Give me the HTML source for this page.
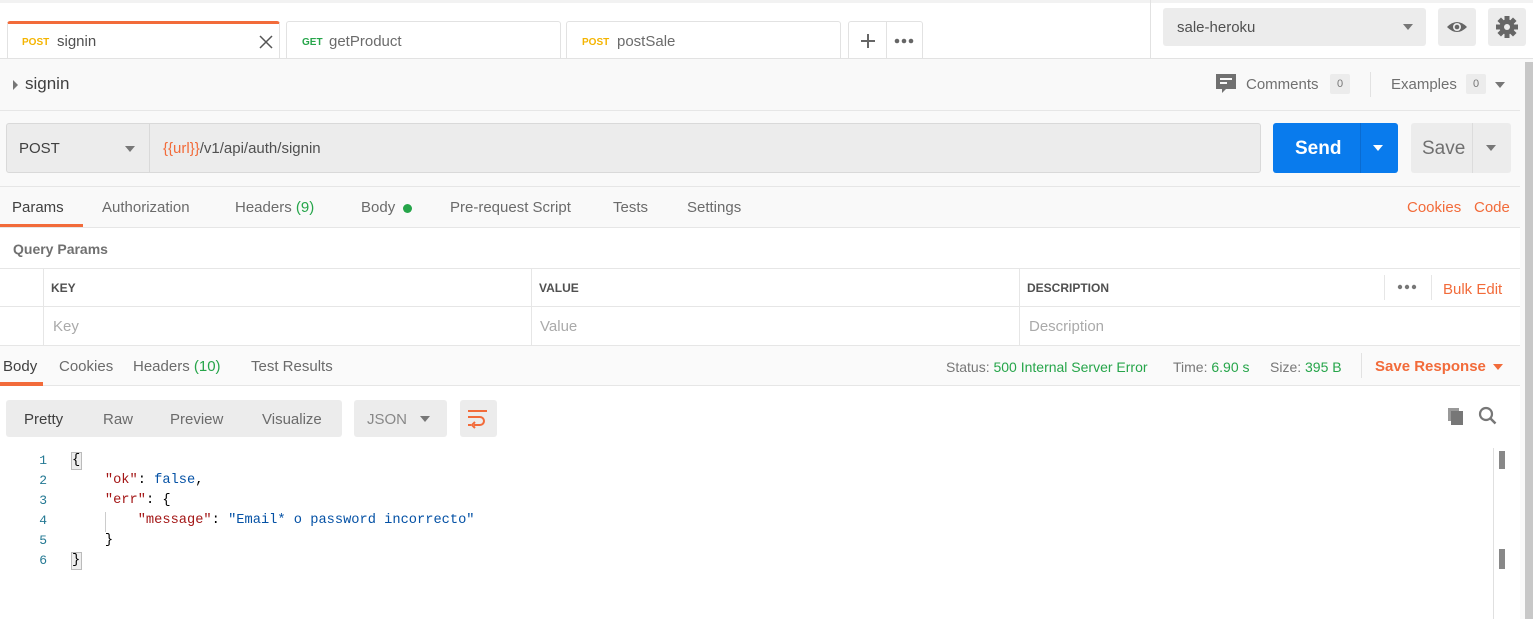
<!DOCTYPE html>
<html><head><meta charset="utf-8"><style>
*{box-sizing:border-box;margin:0;padding:0}
body{width:1533px;height:619px;overflow:hidden;background:#fff;font-family:"Liberation Sans",sans-serif;font-size:15px;color:#505050;position:relative}
.a{position:absolute;white-space:nowrap}
.or{color:#f26b3a}.gr{color:#26a54a}
.tab{position:absolute;top:21px;height:38px;background:#fff;border:1px solid #e2e2e2;border-bottom:none;border-radius:3px 3px 0 0}
.m{font-size:10px;font-weight:bold;position:absolute;top:15px}
.t{position:absolute;top:11px;font-size:15px;color:#6b6b6b}
.tri{width:0;height:0;border-left:5px solid transparent;border-right:5px solid transparent;border-top:6px solid #777;position:absolute}
.mono{font-family:"Liberation Mono",monospace;font-size:13px}
</style></head><body>
<div class="a" style="left:0;top:0;width:1533px;height:3px;background:#f2f2f2"></div>
<div class="tab" style="left:7px;width:273px;border-top:3px solid #f26b3a;height:38px;background:#fff"><span class="m" style="left:14px;color:#f4b400;top:13px">POST</span><span class="t" style="left:49px;top:9px;color:#505050">signin</span><svg class="a" style="left:251px;top:11px" width="14" height="14"><path d="M1 1L13 13M13 1L1 13" stroke="#555" stroke-width="1.5"/></svg></div>
<div class="tab" style="left:286px;width:275px"><span class="m" style="left:15px;color:#26a54a">GET</span><span class="t" style="left:42px">getProduct</span></div>
<div class="tab" style="left:566px;width:275px"><span class="m" style="left:15px;color:#f4b400">POST</span><span class="t" style="left:50px">postSale</span></div>
<div class="tab" style="left:848px;width:75px"><svg class="a" style="left:11px;top:11px" width="16" height="16"><path d="M8 1v14M1 8h14" stroke="#666" stroke-width="2"/></svg><div class="a" style="left:37px;top:0;width:1px;height:37px;background:#e2e2e2"></div><svg class="a" style="left:45px;top:16px" width="22" height="6"><circle cx="3" cy="3" r="2.3" fill="#666"/><circle cx="10" cy="3" r="2.3" fill="#666"/><circle cx="17" cy="3" r="2.3" fill="#666"/></svg></div>
<div class="a" style="left:1150px;top:0;width:1px;height:58px;background:#e2e2e2"></div>
<div class="a" style="left:1163px;top:8px;width:263px;height:38px;background:#ececec;border-radius:3px"><span class="a" style="left:14px;top:11px;color:#505050">sale-heroku</span><div class="tri" style="left:240px;top:16px"></div></div>
<div class="a" style="left:1438px;top:8px;width:38px;height:38px;background:#ececec;border-radius:3px"><svg width="38" height="38"><path d="M9 19 Q19 9 29 19 Q19 29 9 19Z" fill="#666"/><circle cx="19" cy="19" r="4" fill="#ececec"/><circle cx="19" cy="19" r="2.3" fill="#666"/></svg></div>
<div class="a" style="left:1488px;top:8px;width:38px;height:38px;background:#ececec;border-radius:3px"><svg width="38" height="38"><g fill="#666" transform="translate(19 19)"><circle r="7.5"/><rect x="-2.5" y="-11" width="5" height="22"/><rect x="-2.5" y="-11" width="5" height="22" transform="rotate(45)"/><rect x="-2.5" y="-11" width="5" height="22" transform="rotate(90)"/><rect x="-2.5" y="-11" width="5" height="22" transform="rotate(135)"/></g><circle cx="19" cy="19" r="3" fill="#ececec"/></svg></div>
<div class="a" style="left:0;top:58px;width:1533px;height:169px;background:#f9f9f9;border-top:1px solid #e2e2e2"></div>
<div class="a" style="left:1525px;top:62px;width:8px;height:557px;background:#c8c8c8"></div>
<div class="a" style="left:1520px;top:62px;width:5px;height:557px;background:#fafafa"></div>
<div class="a" style="left:13px;top:80px;border-top:5px solid transparent;border-bottom:5px solid transparent;border-left:5px solid #777"></div>
<span class="a" style="left:25px;top:74px;font-size:17px;color:#404040">signin</span>
<svg class="a" style="left:1215px;top:73px" width="22" height="22"><path d="M1 1h20v15H11l-4 4v-4H1z" fill="#707070"/><rect x="5" y="5" width="12" height="2" fill="#f9f9f9"/><rect x="5" y="9" width="7" height="2" fill="#f9f9f9"/></svg>
<span class="a" style="left:1246px;top:76px;color:#707070">Comments</span>
<span class="a" style="left:1330px;top:74px;width:20px;height:20px;background:#ececec;border-radius:2px;font-size:11px;text-align:center;line-height:20px;color:#777">0</span>
<div class="a" style="left:1370px;top:72px;width:1px;height:25px;background:#e2e2e2"></div>
<span class="a" style="left:1391px;top:76px;color:#707070">Examples</span>
<span class="a" style="left:1466px;top:74px;width:20px;height:20px;background:#ececec;border-radius:2px;font-size:11px;text-align:center;line-height:20px;color:#777">0</span>
<div class="tri" style="left:1495px;top:82px"></div>
<div class="a" style="left:0;top:110px;width:1520px;height:1px;background:#e6e6e6"></div>
<div class="a" style="left:6px;top:123px;width:1255px;height:50px;background:#ececec;border:1px solid #d9d9d9;border-radius:3px"></div>
<div class="a" style="left:149px;top:124px;width:1px;height:48px;background:#d9d9d9"></div>
<span class="a" style="left:19px;top:140px;color:#404040">POST</span><div class="tri" style="left:125px;top:146px"></div>
<span class="a" style="left:163px;top:140px;color:#505050"><span class="or">{{url}}</span>/v1/api/auth/signin</span>
<div class="a" style="left:1273px;top:123px;width:125px;height:50px;background:#097bed;border-radius:3px"><span class="a" style="left:22px;top:15px;color:#fff;font-size:19px;font-weight:bold">Send</span><div class="a" style="left:87px;top:0;width:1px;height:50px;background:#0a6bd0"></div><div class="tri" style="left:100px;top:22px;border-top-color:#fff"></div></div>
<div class="a" style="left:1411px;top:123px;width:100px;height:50px;background:#ececec;border-radius:3px"><span class="a" style="left:11px;top:15px;color:#707070;font-size:19px">Save</span><div class="a" style="left:61px;top:0;width:1px;height:50px;background:#dcdcdc"></div><div class="tri" style="left:75px;top:22px"></div></div>
<div class="a" style="left:0;top:186px;width:1520px;height:1px;background:#e6e6e6"></div>
<span class="a" style="left:12px;top:199px;color:#404040">Params</span>
<div class="a" style="left:0;top:224px;width:83px;height:3px;background:#f26b3a"></div>
<span class="a" style="left:102px;top:199px;color:#6b6b6b">Authorization</span>
<span class="a" style="left:235px;top:199px;color:#6b6b6b">Headers <span class="gr">(9)</span></span>
<span class="a" style="left:361px;top:199px;color:#6b6b6b">Body</span><div class="a" style="left:403px;top:204px;width:9px;height:9px;border-radius:50%;background:#26a54a"></div>
<span class="a" style="left:450px;top:199px;color:#6b6b6b">Pre-request Script</span>
<span class="a" style="left:613px;top:199px;color:#6b6b6b">Tests</span>
<span class="a" style="left:687px;top:199px;color:#6b6b6b">Settings</span>
<span class="a or" style="left:1407px;top:199px">Cookies</span><span class="a or" style="left:1474px;top:199px">Code</span>
<div class="a" style="left:0;top:227px;width:1520px;height:1px;background:#e6e6e6"></div>
<span class="a" style="left:13px;top:241px;color:#707070;font-weight:bold;font-size:14px">Query Params</span>
<div class="a" style="left:0;top:268px;width:1520px;height:1px;background:#e6e6e6"></div>
<div class="a" style="left:0;top:306px;width:1520px;height:1px;background:#e6e6e6"></div>
<div class="a" style="left:43px;top:268px;width:1px;height:77px;background:#e6e6e6"></div>
<div class="a" style="left:531px;top:268px;width:1px;height:77px;background:#e6e6e6"></div>
<div class="a" style="left:1019px;top:268px;width:1px;height:77px;background:#e6e6e6"></div>
<div class="a" style="left:1384px;top:275px;width:1px;height:25px;background:#e6e6e6"></div>
<div class="a" style="left:1431px;top:275px;width:1px;height:25px;background:#e6e6e6"></div>
<span class="a" style="left:51px;top:281px;font-size:12px;font-weight:bold;color:#505050">KEY</span>
<span class="a" style="left:539px;top:281px;font-size:12px;font-weight:bold;color:#505050">VALUE</span>
<span class="a" style="left:1027px;top:281px;font-size:12px;font-weight:bold;color:#505050">DESCRIPTION</span>
<svg class="a" style="left:1397px;top:284px" width="22" height="6"><circle cx="3" cy="3" r="2.2" fill="#777"/><circle cx="10" cy="3" r="2.2" fill="#777"/><circle cx="17" cy="3" r="2.2" fill="#777"/></svg>
<span class="a or" style="left:1443px;top:281px">Bulk Edit</span>
<span class="a" style="left:53px;top:318px;color:#aaa">Key</span>
<span class="a" style="left:540px;top:318px;color:#aaa">Value</span>
<span class="a" style="left:1029px;top:318px;color:#aaa">Description</span>
<div class="a" style="left:0;top:345px;width:1520px;height:41px;background:#fafafa;border-top:1px solid #e6e6e6;border-bottom:1px solid #e6e6e6"></div>
<span class="a" style="left:3px;top:358px;color:#404040">Body</span>
<div class="a" style="left:0;top:382px;width:43px;height:4px;background:#f26b3a"></div>
<span class="a" style="left:59px;top:358px;color:#6b6b6b">Cookies</span>
<span class="a" style="left:133px;top:358px;color:#6b6b6b">Headers <span class="gr">(10)</span></span>
<span class="a" style="left:251px;top:358px;color:#6b6b6b">Test Results</span>
<span class="a" style="left:946px;top:359px;font-size:14px;color:#777">Status: <span class="gr">500 Internal Server Error</span></span>
<span class="a" style="left:1173px;top:359px;font-size:14px;color:#777">Time: <span class="gr">6.90 s</span></span>
<span class="a" style="left:1270px;top:359px;font-size:14px;color:#777">Size: <span class="gr">395 B</span></span>
<div class="a" style="left:1361px;top:353px;width:1px;height:25px;background:#e2e2e2"></div>
<span class="a or" style="left:1375px;top:358px;font-weight:bold">Save Response</span><div class="tri" style="left:1493px;top:364px;border-top-color:#f26b3a"></div>
<div class="a" style="left:6px;top:400px;width:336px;height:37px;background:#ececec;border-radius:3px"></div>
<span class="a" style="left:24px;top:411px;color:#404040">Pretty</span>
<span class="a" style="left:103px;top:411px;color:#6b6b6b">Raw</span>
<span class="a" style="left:170px;top:411px;color:#6b6b6b">Preview</span>
<span class="a" style="left:262px;top:411px;color:#6b6b6b">Visualize</span>
<div class="a" style="left:354px;top:400px;width:93px;height:37px;background:#ececec;border-radius:3px"><span class="a" style="left:13px;top:11px;color:#888">JSON</span><div class="tri" style="left:66px;top:16px"></div></div>
<div class="a" style="left:460px;top:400px;width:37px;height:37px;background:#ececec;border-radius:3px"><svg width="37" height="37"><path d="M8 11h19M8 17h12a4 4 0 0 1 0 8h-6M8 25h3" stroke="#f26b3a" stroke-width="2" fill="none"/><path d="M15 22l-3 3 3 3" stroke="#f26b3a" stroke-width="2" fill="none"/></svg></div>
<svg class="a" style="left:1446px;top:406px" width="20" height="20"><rect x="2" y="2" width="11" height="13" fill="#999"/><rect x="5" y="5" width="12" height="14" fill="#777"/></svg>
<svg class="a" style="left:1478px;top:406px" width="20" height="20"><circle cx="8" cy="8" r="6" stroke="#777" stroke-width="2.2" fill="none"/><path d="M12.5 12.5l5 5" stroke="#777" stroke-width="2.5"/></svg>
<div class="a mono" style="left:0;top:451px;line-height:20px;color:#237893;white-space:normal">
<div style="position:absolute;left:37px;width:10px;text-align:right">1<br>2<br>3<br>4<br>5<br>6</div></div>
<div class="a" style="left:71px;top:452px;width:11px;height:18px;border:1px solid #bbb;background:#eee"></div>
<div class="a" style="left:71px;top:552px;width:11px;height:18px;border:1px solid #bbb;background:#eee"></div>
<div class="a" style="left:105px;top:512px;width:1px;height:20px;background:#ccc"></div>
<pre class="a mono" style="left:72px;top:451px;line-height:20px;color:#000;white-space:pre;font-size:13.7px">{
    <span style="color:#a31515">"ok"</span>: <span style="color:#0451a5">false</span>,
    <span style="color:#a31515">"err"</span>: {
        <span style="color:#a31515">"message"</span>: <span style="color:#0451a5">"Email* o password incorrecto"</span>
    }
}</pre>
<div class="a" style="left:1493px;top:448px;width:1px;height:171px;background:#e0e0e0"></div>
<div class="a" style="left:1499px;top:451px;width:6px;height:18px;background:#888"></div>
<div class="a" style="left:1499px;top:549px;width:6px;height:20px;background:#888"></div>
</body></html>
